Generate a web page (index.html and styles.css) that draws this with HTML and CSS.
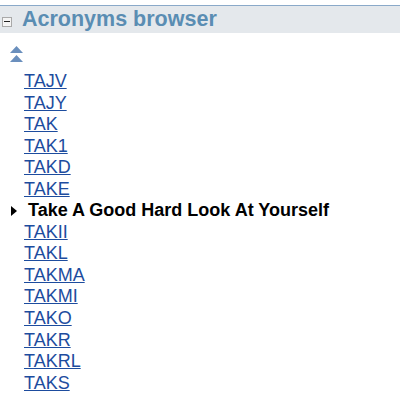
FILE: index.html
```html
<!DOCTYPE html>
<html>
<head>
<meta charset="utf-8">
<link rel="stylesheet" href="styles.css">
</head>
<body>
<div class="panel">
  <div class="header">
    <span class="toggle"><span class="minus"></span></span>
    <h1 class="title">Acronyms browser</h1>
  </div>
  <div class="up">
    <svg width="13" height="17" viewBox="0 0 13 17"><path d="M6.5 0 L13 7 L0 7 Z M6.5 9 L13 16 L0 16 Z" fill="#6a8fbd"/></svg>
  </div>
  <ul class="list">
    <li><a href="#">TAJV</a></li>
    <li><a href="#">TAJY</a></li>
    <li><a href="#">TAK</a></li>
    <li><a href="#">TAK1</a></li>
    <li><a href="#">TAKD</a></li>
    <li><a href="#">TAKE</a></li>
    <li class="current"><span class="arrow"></span><span class="cur-text">Take A Good Hard Look At Yourself</span></li>
    <li><a href="#">TAKII</a></li>
    <li><a href="#">TAKL</a></li>
    <li><a href="#">TAKMA</a></li>
    <li><a href="#">TAKMI</a></li>
    <li><a href="#">TAKO</a></li>
    <li><a href="#">TAKR</a></li>
    <li><a href="#">TAKRL</a></li>
    <li><a href="#">TAKS</a></li>
  </ul>
</div>
</body>
</html>
```
FILE: styles.css
```css
html, body {
  margin: 0;
  padding: 0;
  background: #fff;
  font-family: "Liberation Sans", Arial, sans-serif;
}
.panel {
  padding-top: 5px;
}
.header {
  display: flex;
  align-items: center;
  height: 27px;
  border-top: 1px solid #8aa9c9;
  background: #e4e8ec;
  padding-left: 2px;
}
.toggle {
  box-sizing: border-box;
  width: 10px;
  height: 10px;
  border: 1px solid #a9a9a9;
  background: #f4f4f4;
  display: flex;
  align-items: center;
  justify-content: center;
  margin-top: 4px;
}
.minus {
  width: 6px;
  height: 1px;
  background: #222;
}
.title {
  margin: 0 0 0 10px;
  font-size: 21.5px;
  font-weight: bold;
  color: #5a8db3;
}
.up {
  padding: 13px 0 0 10px;
  height: 20px;
}
.up svg { display: block; }
.list {
  list-style: none;
  margin: 5px 0 0 0;
  padding: 0;
}
.list li {
  font-size: 18px;
  line-height: 21.55px;
  padding-left: 24px;
}
.list a {
  color: #1d4c9e;
  text-decoration: underline;
}
.list li.current {
  display: flex;
  align-items: center;
  padding-left: 11px;
}
.arrow {
  width: 0;
  height: 0;
  border-left: 6px solid #000;
  border-top: 5px solid transparent;
  border-bottom: 5px solid transparent;
  margin-right: 11px;
}
.cur-text {
  font-weight: bold;
  color: #000;
  font-size: 18px;
}
```
